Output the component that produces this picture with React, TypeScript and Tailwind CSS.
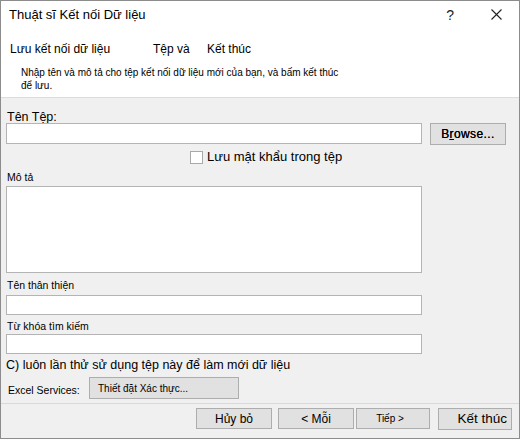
import React from 'react';

const font = { fontFamily: '"Liberation Sans", Arial, sans-serif' };

const TextBox: React.FC<{ className?: string }> = ({ className = '' }) => (
  <div className={`bg-white border border-[#b4b4b4] ${className}`} />
);

const Btn: React.FC<{ className?: string; children: React.ReactNode }> = ({ className = '', children }) => (
  <div className={`flex items-center justify-center bg-[#e1e1e1] border border-[#adadad] text-black ${className}`}>
    {children}
  </div>
);

const App: React.FC = () => {
  return (
    <div style={font} className="w-[520px] h-[439px] border border-[#8c8c8c] flex flex-col bg-[#f0f0f0] text-black overflow-hidden">
      {/* Header */}
      <div className="h-[97px] shrink-0 bg-white border-b border-[#dcdcdc] flex flex-col">
        <div className="h-[27px] flex items-center pl-[8px] pr-[16px]">
          <span className="text-[13px] leading-[14px] flex-1">Thuật sĩ Kết nối Dữ liệu</span>
          <span className="text-[14px] leading-[14px] text-[#222] mr-[37px]">?</span>
          <svg width="11" height="11" viewBox="0 0 11 11" className="mr-[1px]">
            <path d="M0.5 0.5 L10.5 10.5 M10.5 0.5 L0.5 10.5" stroke="#222" strokeWidth="1.1" fill="none" />
          </svg>
        </div>
        <div className="mt-[13px] h-[16px] flex items-center text-[12px] leading-[16px] pl-[9px]">
          <span className="w-[143px]">Lưu kết nối dữ liệu</span>
          <span className="w-[54px]">Tệp và</span>
          <span>Kết thúc</span>
        </div>
        <div className="mt-[9px] pl-[20px] text-[10px] leading-[13px]">
          <div>Nhập tên và mô tả cho tệp kết nối dữ liệu mới của bạn, và bấm kết thúc</div>
          <div>để lưu.</div>
        </div>
      </div>

      {/* Body */}
      <div className="flex-1 flex flex-col px-[5px]">
        <div className="mt-[13px] h-[12px] leading-[12px] text-[12.5px] pl-[1px]">Tên Tệp:</div>
        <div className="h-[22px] flex items-start">
          <TextBox className="w-[416px] h-[21px]" />
          <Btn className="ml-[8px] w-[76px] h-[22px] text-[12px] tracking-[0.4px] [text-shadow:0_0_0.4px_#000]">
            <span>B<span className="underline">r</span>owse...</span>
          </Btn>
        </div>
        <div className="mt-[5px] h-[14px] flex items-center">
          <div className="ml-[184px] w-[13px] h-[13px] bg-white border border-[#a9a9a9]" />
          <span className="ml-[4px] text-[13px] leading-[14px]">Lưu mật khẩu trong tệp</span>
        </div>
        <div className="mt-[7px] h-[12px] leading-[12px] text-[10.5px] pl-[1px]">Mô tả</div>
        <TextBox className="mt-[3px] w-[416px] h-[87px]" />
        <div className="mt-[6px] h-[12px] leading-[12px] text-[10.5px] pl-[1px]">Tên thân thiện</div>
        <TextBox className="mt-[4px] w-[416px] h-[20px]" />
        <div className="mt-[5px] h-[12px] leading-[12px] text-[10.5px] pl-[1px]">Từ khóa tìm kiếm</div>
        <TextBox className="mt-[2px] w-[416px] h-[20px]" />
        <div className="mt-[4px] h-[14px] leading-[14px] text-[12.5px]">C) luôn lần thử sử dụng tệp này để làm mới dữ liệu</div>
        <div className="mt-[5px] h-[22px] flex">
          <span className="w-[83px] self-end mb-[3px] pl-[2px] text-[10.5px] leading-[12px]">Excel Services:</span>
          <Btn className="w-[150px] h-[22px] text-[10px] justify-start pl-[8px]">Thiết đặt Xác thực...</Btn>
        </div>
        <div className="mt-[4px] border-t border-[#d9d9d9] -mx-[5px]" />
        <div className="mt-[4px] h-[21px] flex">
          <Btn className="ml-[190px] w-[76px] h-[21px] text-[12px]">Hủy bỏ</Btn>
          <Btn className="ml-[6px] w-[76px] h-[21px] text-[12px]">&lt; Mỗi</Btn>
          <Btn className="ml-[2px] w-[74px] h-[21px] text-[10px] items-start pt-[2px]">
            <span className="ml-[-6px]">Tiếp &gt;</span>
          </Btn>
          <Btn className="ml-[8px] w-[74px] h-[22px] text-[13.5px] justify-end pr-[4px]">Kết thúc</Btn>
        </div>
      </div>
    </div>
  );
};

export default App;
